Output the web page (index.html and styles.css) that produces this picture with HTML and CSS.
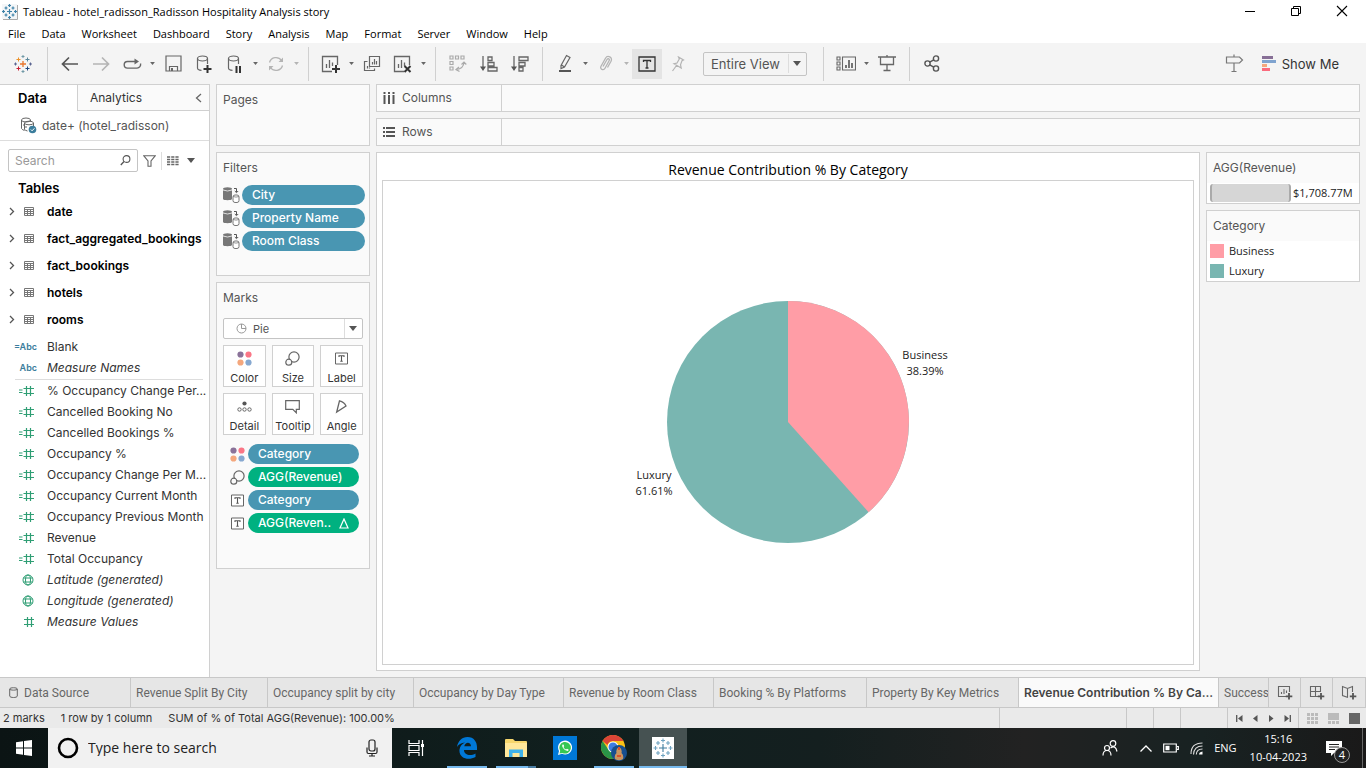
FILE: index.html
```html
<!DOCTYPE html>
<html lang="en">
<head>
<meta charset="utf-8">
<meta name="viewport" content="width=device-width, initial-scale=1">
<title>Tableau - hotel_radisson_Radisson Hospitality Analysis story</title>
<link rel="stylesheet" href="styles.css">
</head>
<body>
<svg class="defs" aria-hidden="true">
  <symbol id="caret" viewBox="0 0 8 5"><path d="M0 0h8L4 5z" fill="currentColor"/></symbol>
  <symbol id="table" viewBox="0 0 10 9"><path d="M.5.5h9v8h-9zM.5 2.500h9M.5 4.500h9M.5 6.500h9M3.500 2.500v6M6.500 2.500v6" fill="none" stroke="#777"/></symbol>
  <symbol id="chev" viewBox="0 0 6 9"><path d="M1 1l3.500 3.500L1 8" fill="none" stroke="#555" stroke-width="1.300"/></symbol>
  <symbol id="hash" viewBox="0 0 10 10"><path d="M3.500 0v10M7.500 0v10M0 2.500h10M0 7.500h10" stroke="#2f9e74" stroke-width="1.200"/></symbol>
  <symbol id="calc" viewBox="0 0 15 10"><path d="M7.500 0v10M11.500 0v10M4.500 2.500H15M4.500 7.500H15M0 4h3.500M0 6.500h3.500" stroke="#2f9e74" stroke-width="1.200"/></symbol>
  <symbol id="globe" viewBox="0 0 12 12"><g fill="none" stroke="#2f9e74" stroke-width="1"><circle cx="6" cy="6" r="5"/><ellipse cx="6" cy="6" rx="2.500" ry="5"/><path d="M1.500 4h9M1.500 8h9"/></g></symbol>
  <symbol id="context" viewBox="0 0 17 16"><path d="M0 2.500h9V12c0 1.600-9 1.600-9 0z" fill="#777"/><ellipse cx="4.500" cy="1.800" rx="4.500" ry="1.600" fill="#777"/><path d="M0 3q4.500 2 9 0" stroke="#fafafa" fill="none" stroke-width=".8"/><rect x="10" y="8" width="6" height="7.500" rx="2" fill="#fff" stroke="#777"/><path d="M10 9.500q3 1.200 6 0" fill="none" stroke="#777" stroke-width=".8"/><path d="M11 1.500h2.500V5M11.800 4l1.700 1.700L15.200 4" fill="none" stroke="#555"/></symbol>
  <symbol id="dots" viewBox="0 0 15 15"><circle cx="3.500" cy="3.500" r="3.100" fill="#8a7299"/><circle cx="11.500" cy="3.500" r="3.100" fill="#fa7686"/><circle cx="3.500" cy="11.500" r="3.100" fill="#f4a77d"/><circle cx="11.500" cy="11.500" r="3.100" fill="#86a8d0"/></symbol>
  <symbol id="size" viewBox="0 0 15 15"><g fill="none" stroke="#666" stroke-width="1.200"><circle cx="9" cy="6" r="5.100"/><circle cx="3.800" cy="11.200" r="3" fill="#fafafa"/></g></symbol>
  <symbol id="label" viewBox="0 0 13 13"><path d="M.5 1h12v11H.5z" fill="#fff" stroke="#666"/><path d="M4 5V3.800h5V5M6.500 3.800v5.500M5.300 9.300h2.400" fill="none" stroke="#555" stroke-width="1.100"/></symbol>
  <symbol id="sheet" viewBox="0 0 20 18"><path d="M11 16.500H1.500v-15h15V10M5.500 9v4M8.500 5v8M11.500 7.500V11" fill="none" stroke="#666" stroke-width="1.300"/></symbol>
  <symbol id="db" viewBox="0 0 16 18"><g fill="none" stroke="#666" stroke-width="1.200"><ellipse cx="6.500" cy="3.500" rx="5" ry="2.500"/><path d="M1.500 3.500V13c0 1.500 1.500 2.200 4 2.300M11.500 3.500V9"/></g></symbol>
</svg>

<header class="titlebar">
  <svg class="app-icon" width="16" height="16" viewBox="0 0 16 16"><path d="M0 0h15v15H0z" fill="#f4f6f8"/><path d="M15.500 1v14.500H1" fill="none" stroke="#aaa"/><g stroke="#3e82a8" stroke-width="1.200"><path d="M7.500 5v5M5 7.500h5M7.500 0v3M6 1.500h3M7.500 12v3M6 13.500h3M1.500 6v3M0 7.500h3M13.500 6v3M12 7.500h3M4 2.500v3M2.500 4h3M11 2.500v3M9.500 4h3M4 9.500v3M2.500 11h3M11 9.500v3M9.500 11h3"/></g></svg>
  <h1>Tableau - hotel_radisson_Radisson Hospitality Analysis story</h1>
  <div class="window-buttons">
    <button type="button" aria-label="Minimize"><svg width="12" height="12" viewBox="0 0 12 12"><path d="M1 6.500h10" stroke="#000"/></svg></button>
    <button type="button" aria-label="Restore"><svg width="12" height="12" viewBox="0 0 12 12"><path d="M1.500 3.500h7v7h-7zM3.500 3.500v-2h7v7h-2" fill="none" stroke="#000"/></svg></button>
    <button type="button" aria-label="Close"><svg width="12" height="12" viewBox="0 0 12 12"><path d="M1 1l10 10M11 1L1 11" stroke="#000" stroke-width="1.100"/></svg></button>
  </div>
</header>

<nav class="menubar" aria-label="Main menu">
  <button type="button">File</button><button type="button">Data</button><button type="button">Worksheet</button><button type="button">Dashboard</button><button type="button">Story</button><button type="button">Analysis</button><button type="button">Map</button><button type="button">Format</button><button type="button">Server</button><button type="button">Window</button><button type="button">Help</button>
</nav>

<div class="toolbar" role="toolbar" aria-label="Toolbar">
  <button type="button" class="tool start" aria-label="Start page"><svg width="18" height="18" viewBox="0 0 18 18"><g stroke-width="1"><path d="M9 6v6M6 9h6" stroke="#e8762d" stroke-width="1.300"/><path d="M9 0v3M7.500 1.500h3M9 15v3M7.500 16.500h3" stroke="#7099a6"/><path d="M1.500 7.500v3M0 9h3M16.500 7.500v3M15 9h3" stroke="#5b6591"/><path d="M4.500 2.500v4M2.500 4.500h4" stroke="#eb9129"/><path d="M13.500 2.500v4M11.500 4.500h4" stroke="#59879b"/><path d="M4.500 11.500v4M2.500 13.500h4" stroke="#c72035"/><path d="M13.500 11.500v4M11.500 13.500h4" stroke="#1f457e"/></g></svg></button>
  <span class="sep"></span>
  <button type="button" class="tool" aria-label="Undo"><svg width="18" height="16" viewBox="0 0 18 16"><path d="M17 8H2M8 1.500L1.500 8 8 14.500" fill="none" stroke="#555" stroke-width="1.700"/></svg></button>
  <button type="button" class="tool" aria-label="Redo"><svg width="18" height="16" viewBox="0 0 18 16"><path d="M1 8h15M10 1.500L16.500 8 10 14.500" fill="none" stroke="#b4b4b4" stroke-width="1.700"/></svg></button>
  <div class="split"><button type="button" class="tool" aria-label="Replay"><svg width="19" height="12" viewBox="0 0 19 12"><path d="M14 3.500H4.500a3.300 3.300 0 0 0 0 6.600h9.500a3.600 3.600 0 0 0 3.500-4.600" fill="none" stroke="#666" stroke-width="1.400"/><path d="M11.500.5v6l4.500-3z" fill="#666"/></svg></button><button type="button" class="drop" aria-label="Replay options"><svg width="5" height="3"><use href="#caret"/></svg></button></div>
  <button type="button" class="tool" aria-label="Save"><svg width="17" height="17" viewBox="0 0 17 17"><path d="M1 1h15v15H1zM4.500 16v-4.500h8V16" fill="none" stroke="#666" stroke-width="1.200"/><path d="M6 13h2v3H6z" fill="#666"/></svg></button>
  <button type="button" class="tool" aria-label="New data source"><svg width="16" height="18"><use href="#db"/><path d="M11.500 10v8M7.500 14h8" stroke="#333" stroke-width="2"/></svg></button>
  <div class="split"><button type="button" class="tool" aria-label="Pause auto updates"><svg width="16" height="18"><use href="#db"/><path d="M9.500 11v7M13 11v7" stroke="#333" stroke-width="2"/></svg></button><button type="button" class="drop" aria-label="Pause options"><svg width="5" height="3"><use href="#caret"/></svg></button></div>
  <div class="split dim"><button type="button" class="tool" aria-label="Run update"><svg width="18" height="16" viewBox="0 0 18 16"><path d="M2.500 6.500A6.700 6.700 0 0 1 14.500 4.500M15.500 9.500A6.700 6.700 0 0 1 3.500 11.500" fill="none" stroke="#b4b4b4" stroke-width="1.300"/><path d="M11.500 6h4.500V1.500zM6.500 10H2v4.500z" fill="#b4b4b4"/></svg></button><button type="button" class="drop" aria-label="Update options"><svg width="5" height="3"><use href="#caret"/></svg></button></div>
  <span class="sep"></span>
  <div class="split"><button type="button" class="tool" aria-label="New worksheet"><svg width="20" height="18"><use href="#sheet"/><path d="M15 10v8M11 14h8" stroke="#333" stroke-width="2"/></svg></button><button type="button" class="drop" aria-label="New options"><svg width="5" height="3"><use href="#caret"/></svg></button></div>
  <button type="button" class="tool" aria-label="Duplicate"><svg width="18" height="18" viewBox="0 0 18 18"><path d="M6.500 1.500h10v10h-10zM4.500 6.500h-3v9h10v-2M9.500 7v2.500M11.500 4v5.500M13.500 6v3.500M4.500 11v2.500M6.500 13.500v-1" fill="none" stroke="#666" stroke-width="1.200"/></svg></button>
  <div class="split"><button type="button" class="tool" aria-label="Clear sheet"><svg width="20" height="18"><use href="#sheet"/><path d="M11.500 11l6 6M17.500 11l-6 6" stroke="#333" stroke-width="2"/></svg></button><button type="button" class="drop" aria-label="Clear options"><svg width="5" height="3"><use href="#caret"/></svg></button></div>
  <span class="sep"></span>
  <button type="button" class="tool" aria-label="Swap rows and columns"><svg width="18" height="18" viewBox="0 0 18 18"><g fill="none" stroke="#aaa" stroke-width="1.200"><path d="M1 1h3v3H1zM6.500 1h3v3h-3zM12 1h3v3h-3zM1 6.500h3v3H1zM1 12h3v3H1zM15 7.500q-.5 6-7.500 7M12.500 9.500L15 7l2.300 2.500M10 12l-3 2.600 3.500 2"/></g></svg></button>
  <button type="button" class="tool" aria-label="Sort ascending"><svg width="18" height="16" viewBox="0 0 18 16"><path d="M3 0v13M8 1h4v3.500H8zM8 6.500h6V10H8zM8 11.500h9V15H8z" fill="none" stroke="#666" stroke-width="1.300"/><path d="M0 10.500h6L3 15z" fill="#555"/></svg></button>
  <button type="button" class="tool" aria-label="Sort descending"><svg width="18" height="16" viewBox="0 0 18 16"><path d="M3 0v13M8 1h9v3.500H8zM8 6.500h6V10H8zM8 11.500h4V15H8z" fill="none" stroke="#666" stroke-width="1.300"/><path d="M0 10.500h6L3 15z" fill="#555"/></svg></button>
  <span class="sep"></span>
  <div class="split"><button type="button" class="tool" aria-label="Highlight"><svg width="14" height="19" viewBox="0 0 14 19"><path d="M3 11.500L8.500 1.500l3.500 2L6.500 13 3 14.500zM3.500 11l3 2" fill="none" stroke="#666" stroke-width="1.200"/><path d="M1 16h12v2H1z" fill="#555"/></svg></button><button type="button" class="drop" aria-label="Highlight options"><svg width="5" height="3"><use href="#caret"/></svg></button></div>
  <div class="split dim"><button type="button" class="tool" aria-label="Group members"><svg width="14" height="17" viewBox="0 0 14 17"><path d="M4 11.500L8 4.500c1-1.500 3-.5 2.200 1L6 13.300C4.500 16 .5 14 2 11.200L6.500 3.200C8.500-.2 14 2 12 6.200L8.500 12.500" fill="none" stroke="#b4b4b4" stroke-width="1.300"/></svg></button><button type="button" class="drop" aria-label="Group options"><svg width="5" height="3"><use href="#caret"/></svg></button></div>
  <button type="button" class="tool pressed" aria-label="Show mark labels" aria-pressed="true"><svg width="18" height="16" viewBox="0 0 18 16"><path d="M1 1h16v14H1zM5.500 6V4.500h7V6M9 4.500v7.500M7.500 12h3" fill="none" stroke="#333" stroke-width="1.300"/></svg></button>
  <button type="button" class="tool" aria-label="Fix axes"><svg width="14" height="16" viewBox="0 0 14 16"><path d="M7.500 1l5 3-1.500.7-1.500 4 .7 3.300L3 7.800l3-.8L8.300 3zM5.500 9.500L1.500 15" fill="none" stroke="#b4b4b4" stroke-width="1.200"/></svg></button>
  <div class="combo fit"><select aria-label="Fit"><option>Entire View</option><option>Standard</option></select><svg width="8" height="5"><use href="#caret"/></svg></div>
  <span class="sep"></span>
  <div class="split"><button type="button" class="tool" aria-label="Show or hide cards"><svg width="20" height="15" viewBox="0 0 20 15"><path d="M1 1h3v3H1zM1 6h3v3H1zM1 11h3v3H1zM6.500 1h13v13h-13z" fill="none" stroke="#666" stroke-width="1.100"/><path d="M10 9v3M13 4v8M16 7v5" stroke="#555" stroke-width="1.600"/></svg></button><button type="button" class="drop" aria-label="Card options"><svg width="5" height="3"><use href="#caret"/></svg></button></div>
  <button type="button" class="tool" aria-label="Presentation mode"><svg width="18" height="17" viewBox="0 0 18 17"><path d="M0 2h18M2.500 2v7.500h13V2M9 9.500V16M5.500 15.500h7M9 0v2" fill="none" stroke="#666" stroke-width="1.300"/></svg></button>
  <span class="sep"></span>
  <button type="button" class="tool" aria-label="Share"><svg width="16" height="17" viewBox="0 0 16 17"><g fill="none" stroke="#555" stroke-width="1.400"><circle cx="3.500" cy="8.500" r="2.600"/><circle cx="12" cy="3.500" r="2.600"/><circle cx="12" cy="13.500" r="2.600"/><path d="M5.700 7.200l4-2.400M5.700 9.800l4 2.400"/></g></svg></button>
  <div class="tool-end">
    <button type="button" class="tool" aria-label="Guide"><svg width="19" height="19" viewBox="0 0 19 19"><path d="M1.500 3h13l3 3-3 3h-13zM9 .5V3M9 9v8.500M6.500 17.500h5" fill="none" stroke="#777" stroke-width="1.200"/></svg></button>
    <button type="button" class="showme"><svg width="14" height="15" viewBox="0 0 14 15"><path d="M0 0h11v3H0z" fill="#876f96"/><path d="M0 4h14v3H0z" fill="#7fa3cf"/><path d="M0 8h5v3H0z" fill="#f4a77d"/><path d="M0 12h8v3H0z" fill="#fa6b7d"/></svg>Show Me</button>
  </div>
</div>

<main class="workspace">
  <aside class="data-pane">
    <div class="pane-tabs"><button type="button" class="pane-tab on">Data</button><button type="button" class="pane-tab off">Analytics<svg width="7" height="10" viewBox="0 0 7 10"><path d="M6 1L1.500 5 6 9" fill="none" stroke="#666" stroke-width="1.300"/></svg></button></div>
    <button type="button" class="datasource"><svg width="17" height="17" viewBox="0 0 17 17"><g fill="none" stroke="#666"><path d="M1.500 3v8.500q1 1.500 3 2"/><ellipse cx="6" cy="3" rx="4.500" ry="2"/><path d="M10.500 3v1"/><ellipse cx="9" cy="6" rx="4.500" ry="1.800"/><path d="M4.500 6v6.500q1 1 3 1.500M13.500 6v3M3 8h1.500v2H7"/></g><circle cx="12.500" cy="12.500" r="3.800" fill="#3b7d9c"/><path d="M10.800 12.500l1.300 1.300 2.300-2.500" fill="none" stroke="#fff"/></svg>date+ (hotel_radisson)</button>
    <div class="search-row">
      <label class="search"><input type="search" placeholder="Search" aria-label="Search"><svg width="11" height="11" viewBox="0 0 11 11"><circle cx="6.500" cy="4" r="3.400" fill="none" stroke="#555" stroke-width="1.100"/><path d="M4 6.500L.8 10" stroke="#555" stroke-width="1.300"/></svg></label>
      <button type="button" aria-label="Filter fields"><svg width="13" height="12" viewBox="0 0 13 12"><path d="M.7.700h11.600L8 6v5.300H5V6z" fill="none" stroke="#666" stroke-width="1.100"/></svg></button>
      <span class="bar"></span>
      <button type="button" class="view-as" aria-label="View as"><svg width="12" height="10" viewBox="0 0 12 10"><path d="M0 1h12M0 3.500h12M0 6h12M0 8.500h12" stroke="#666" stroke-width="1.300" stroke-dasharray="3.200 1"/></svg><svg width="8" height="5"><use href="#caret"/></svg></button>
    </div>
    <h2>Tables</h2>
    <ul class="tables">
      <li><svg width="6" height="9"><use href="#chev"/></svg><svg width="10" height="9"><use href="#table"/></svg>date</li>
      <li><svg width="6" height="9"><use href="#chev"/></svg><svg width="10" height="9"><use href="#table"/></svg>fact_aggregated_bookings</li>
      <li><svg width="6" height="9"><use href="#chev"/></svg><svg width="10" height="9"><use href="#table"/></svg>fact_bookings</li>
      <li><svg width="6" height="9"><use href="#chev"/></svg><svg width="10" height="9"><use href="#table"/></svg>hotels</li>
      <li><svg width="6" height="9"><use href="#chev"/></svg><svg width="10" height="9"><use href="#table"/></svg>rooms</li>
    </ul>
    <ul class="fields dims">
      <li><span class="kind abc">=Abc</span>Blank</li>
      <li><span class="kind abc">Abc</span><em>Measure Names</em></li>
    </ul>
    <ul class="fields">
      <li><span class="kind"><svg width="15" height="10"><use href="#calc"/></svg></span>% Occupancy Change Per...</li>
      <li><span class="kind"><svg width="15" height="10"><use href="#calc"/></svg></span>Cancelled Booking No</li>
      <li><span class="kind"><svg width="15" height="10"><use href="#calc"/></svg></span>Cancelled Bookings %</li>
      <li><span class="kind"><svg width="15" height="10"><use href="#calc"/></svg></span>Occupancy %</li>
      <li><span class="kind"><svg width="15" height="10"><use href="#calc"/></svg></span>Occupancy Change Per M...</li>
      <li><span class="kind"><svg width="15" height="10"><use href="#calc"/></svg></span>Occupancy Current Month</li>
      <li><span class="kind"><svg width="15" height="10"><use href="#calc"/></svg></span>Occupancy Previous Month</li>
      <li><span class="kind"><svg width="15" height="10"><use href="#calc"/></svg></span>Revenue</li>
      <li><span class="kind"><svg width="15" height="10"><use href="#calc"/></svg></span>Total Occupancy</li>
      <li><span class="kind"><svg width="12" height="12"><use href="#globe"/></svg></span><em>Latitude (generated)</em></li>
      <li><span class="kind"><svg width="12" height="12"><use href="#globe"/></svg></span><em>Longitude (generated)</em></li>
      <li><span class="kind"><svg width="10" height="10"><use href="#hash"/></svg></span><em>Measure Values</em></li>
    </ul>
  </aside>

  <div class="cards">
    <section class="card pages"><h2>Pages</h2></section>
    <section class="card filters"><h2>Filters</h2>
      <div class="pill-row"><svg width="17" height="16"><use href="#context"/></svg><button type="button" class="pill">City</button></div>
      <div class="pill-row"><svg width="17" height="16"><use href="#context"/></svg><button type="button" class="pill">Property Name</button></div>
      <div class="pill-row"><svg width="17" height="16"><use href="#context"/></svg><button type="button" class="pill">Room Class</button></div>
    </section>
    <section class="card marks"><h2>Marks</h2>
      <div class="combo mark-type"><svg class="pie-icon" width="11" height="11" viewBox="0 0 11 11"><circle cx="5.500" cy="5.500" r="4.500" fill="none" stroke="#999"/><path d="M5.500 1v4.500H10" fill="none" stroke="#999"/></svg><select aria-label="Mark type"><option>Pie</option><option>Bar</option></select><svg width="8" height="5"><use href="#caret"/></svg></div>
      <div class="mark-grid">
        <button type="button"><svg width="15" height="15"><use href="#dots"/></svg>Color</button>
        <button type="button"><svg width="15" height="15"><use href="#size"/></svg>Size</button>
        <button type="button"><svg width="15" height="15" viewBox="0 0 15 15"><use href="#label" x="1" y="1" width="13" height="13"/></svg>Label</button>
        <button type="button"><svg width="15" height="15" viewBox="0 0 15 15"><circle cx="7.500" cy="4.500" r="2.100" fill="#555"/><g fill="none" stroke="#666"><circle cx="2.500" cy="10.500" r="1.700"/><circle cx="7.500" cy="10.500" r="1.700"/><circle cx="12.500" cy="10.500" r="1.700"/></g></svg>Detail</button>
        <button type="button"><svg width="15" height="15" viewBox="0 0 15 15"><path d="M.7 1.700h13.600v8.600h-3v3.500L7.800 10.300H.7z" fill="none" stroke="#666" stroke-width="1.200"/></svg>Tooltip</button>
        <button type="button"><svg width="15" height="15" viewBox="0 0 15 15"><path d="M2.700 13L5.500 1.800q4.800 1 6.500 5.200z" fill="none" stroke="#666" stroke-width="1.300"/></svg>Angle</button>
      </div>
      <div class="pill-row on-mark"><svg width="15" height="15"><use href="#dots"/></svg><button type="button" class="pill">Category</button></div>
      <div class="pill-row on-mark"><svg width="15" height="15"><use href="#size"/></svg><button type="button" class="pill green">AGG(Revenue)</button></div>
      <div class="pill-row on-mark"><svg width="15" height="13"><use href="#label"/></svg><button type="button" class="pill">Category</button></div>
      <div class="pill-row on-mark"><svg width="15" height="13"><use href="#label"/></svg><button type="button" class="pill green">AGG(Reven..<svg width="10" height="11" viewBox="0 0 10 11"><path d="M5 1l4 9H1z" fill="none" stroke="#fff" stroke-width="1.200"/></svg></button></div>
    </section>
  </div>

  <div class="sheet">
    <section class="shelf"><h2><svg width="12" height="12" viewBox="0 0 12 12"><path d="M1.500 0v2M6 0v2M10.500 0v2M1.500 3v9M6 3v9M10.500 3v9" stroke="#555" stroke-width="2"/></svg>Columns</h2></section>
    <section class="shelf"><h2><svg width="12" height="12" viewBox="0 0 12 12"><path d="M0 2h2M0 6h2M0 10h2M3 2h9M3 6h9M3 10h9" stroke="#555" stroke-width="2"/></svg>Rows</h2></section>
    <div class="view-row">
      <section class="view">
        <h2>Revenue Contribution % By Category</h2>
        <div class="plot">
          <svg class="chart" viewBox="0 0 360 244" role="img" aria-label="Revenue contribution by category">
            <circle cx="180" cy="121" r="121" fill="#79b6b1"/>
            <path d="M180 121V0a121 121 0 0 1 80.600 211.200z" fill="#ff9da6"/>
            <text x="317" y="58">Business</text><text x="317" y="74">38.39%</text>
            <text x="46" y="178">Luxury</text><text x="46" y="194">61.61%</text>
          </svg>
        </div>
      </section>
      <div class="legends">
        <section class="legend"><h2>AGG(Revenue)</h2><div class="range"><span></span>$1,708.77M</div></section>
        <section class="legend"><h2>Category</h2><ul><li><i class="business"></i>Business</li><li><i class="luxury"></i>Luxury</li></ul></section>
      </div>
    </div>
  </div>
</main>

<nav class="sheet-tabs" aria-label="Sheets">
  <button type="button" class="source"><svg width="9" height="11" viewBox="0 0 9 11"><path d="M.7 2v7c0 2 7.600 2 7.600 0V2C8.300.3.700.3.700 2zM.7 2c0 1.500 7.600 1.500 7.600 0" fill="none" stroke="#666"/></svg>Data Source</button>
  <button type="button">Revenue Split By City</button><button type="button">Occupancy split by city</button><button type="button">Occupancy by Day Type</button><button type="button">Revenue by Room Class</button><button type="button">Booking % By Platforms</button><button type="button">Property By Key Metrics</button><button type="button" class="current">Revenue Contribution % By Ca...</button><button type="button">Success</button>
  <button type="button" class="new" aria-label="New worksheet"><svg width="16" height="15" viewBox="0 0 16 15"><path d="M9 11.500H1.500v-10h11V7M4.500 7v2M7 4v5M9.500 5.500V8" fill="none" stroke="#666" stroke-width="1.100"/><path d="M12 8v6.500M8.800 11.300h6.500" stroke="#555" stroke-width="1.800"/></svg></button>
  <button type="button" class="new" aria-label="New dashboard"><svg width="16" height="15" viewBox="0 0 16 15"><path d="M9 11.500H1.500v-10h10V7M1.500 6.500h10M6.500 1.500v10" fill="none" stroke="#666" stroke-width="1.100"/><path d="M12 8v6.500M8.800 11.300h6.500" stroke="#555" stroke-width="1.800"/></svg></button>
  <button type="button" class="new" aria-label="New story"><svg width="16" height="15" viewBox="0 0 16 15"><path d="M7 12.500l-5.500-2v-9l5 2 5-2V7M6.500 3.500v9" fill="none" stroke="#666" stroke-width="1.100"/><path d="M12 8v6.500M8.800 11.300h6.500" stroke="#555" stroke-width="1.800"/></svg></button>
</nav>

<footer class="status">
  <div class="summary"><span>2 marks</span><span>1 row by 1 column</span><span>SUM of % of Total AGG(Revenue): 100.00%</span></div>
  <span></span><span></span><span></span><span></span>
  <div class="pager">
    <button type="button" aria-label="First"><svg width="7" height="7" viewBox="0 0 7 7"><path d="M.7 0v7" stroke="#555" stroke-width="1.300"/><path d="M6.500 0v7L2 3.500z" fill="#555"/></svg></button>
    <button type="button" aria-label="Previous"><svg width="7" height="7" viewBox="0 0 7 7"><path d="M5.500 0v7L1 3.500z" fill="#555"/></svg></button>
    <button type="button" aria-label="Next"><svg width="7" height="7" viewBox="0 0 7 7"><path d="M1 0v7l4.500-3.500z" fill="#555"/></svg></button>
    <button type="button" aria-label="Last"><svg width="7" height="7" viewBox="0 0 7 7"><path d="M6.300 0v7" stroke="#555" stroke-width="1.300"/><path d="M.5 0v7L5 3.500z" fill="#555"/></svg></button>
  </div>
  <div class="modes">
    <button type="button" aria-label="Sheet sorter"><svg width="11" height="11" viewBox="0 0 11 11"><path d="M0 1.500h11M0 5.500h11M0 9.500h11" stroke="#bbb" stroke-width="3" stroke-dasharray="3 1"/></svg></button>
    <button type="button" aria-label="Filmstrip"><svg width="11" height="11" viewBox="0 0 11 11"><path d="M0 0h11v7H0z" fill="#bbb"/><path d="M0 9.500h11" stroke="#bbb" stroke-width="3" stroke-dasharray="3 1"/></svg></button>
    <button type="button" aria-label="Tabs"><svg width="11" height="11" viewBox="0 0 11 11"><path d="M0 0h11v11H0z" fill="#666"/></svg></button>
  </div>
</footer>

<div class="taskbar">
  <button type="button" class="task" aria-label="Start"><svg width="16" height="16" viewBox="0 0 16 16"><path d="M0 2.300L7 1.300v6.200H0zM8 1.100L16 0v7.500H8zM0 8.500h7v6.200l-7-1zM8 8.500h8V16l-8-1.100z" fill="#fff"/></svg></button>
  <label class="task-search"><svg width="22" height="22" viewBox="0 0 22 22"><circle cx="11" cy="11" r="9" fill="none" stroke="#000" stroke-width="2.600"/></svg><input type="text" placeholder="Type here to search" aria-label="Type here to search"><svg width="12" height="18" viewBox="0 0 12 18"><rect x="3" y="1" width="6" height="11" rx="2" fill="none" stroke="#222" stroke-width="1.200"/><path d="M1 8.500v4.500q0 1.500 1.500 1.500h7q1.500 0 1.500-1.500V8.500M6 14.500V17M3 17h6" fill="none" stroke="#222" stroke-width="1.200"/></svg></label>
  <button type="button" class="task" aria-label="Task view"><svg width="17" height="16" viewBox="0 0 17 16"><path d="M1 0v3.500h10V0M1 5.500h10v5H1zM1 16v-3.500h10V16M14.500 0v16" fill="none" stroke="#fff" stroke-width="1.200"/><path d="M13 4h3v3h-3z" fill="#fff"/></svg></button>
  <div class="apps">
    <button type="button" class="task running" aria-label="Edge"><svg width="22" height="22" viewBox="0 0 22 22"><path d="M1 10C2 4 6 0 11.500 0 18 0 21 5 21 10v3H8c0 5 6.500 6.500 11.500 3.500V20C12 24 2.500 21 3.500 12.500 4 9 6 7 9 5.500 5 6 2.500 7.500 1 10zM8.300 9.300H15C15 4.500 9 4.500 8.300 9.300z" fill="#0078d7"/></svg></button>
    <button type="button" class="task running many" aria-label="File Explorer"><svg width="22" height="19" viewBox="0 0 22 19"><path d="M0 2V1q0-1 1-1h7l2 2h11q1 0 1 1v15H0z" fill="#f6d66d"/><path d="M0 4h22v14H0z" fill="#ffe79a"/><path d="M4 10.500h14V18h-3.500v-4h-7v4H4z" fill="#3fb2ea"/></svg></button>
    <button type="button" class="task" aria-label="WhatsApp"><svg width="24" height="24" viewBox="0 0 24 24"><path d="M0 0h24v24H0z" fill="#0078d7"/><path d="M5 19l1-4a7 7 0 1 1 3 2.800z" fill="#fff"/><path d="M6.500 17.500l.7-2.600a5.800 5.800 0 1 1 2.200 2z" fill="#35c752"/><path d="M9.500 8.500q-1 1 .5 3.500 2 3 4.500 3 1.500-.5 1-1.500l-1.500-.8-1 .9q-2-.9-2.500-2.600l.7-.8-.7-1.700z" fill="#fff"/></svg></button>
    <button type="button" class="task running" aria-label="Chrome"><svg width="26" height="26" viewBox="0 0 26 26"><circle cx="12" cy="12" r="12" fill="#fbc116"/><path d="M1.600 6A12 12 0 0 1 22.400 6H12a6 6 0 0 0-5.500 4z" fill="#db4437"/><path d="M1.600 6A12 12 0 0 0 12 24l4.500-8L7 14z" fill="#2a9447"/><circle cx="12" cy="12" r="5.500" fill="#fff"/><circle cx="12" cy="12" r="4.500" fill="#3f7de0"/><circle cx="18" cy="18" r="8" fill="#184f8f"/><path d="M14 24q-1-4 1.500-6-1-4 2.500-6 3.500 2 2.500 6 2.500 2 1.500 6-4 2.500-8 0z" fill="#c99560"/><path d="M17 12h2v3h-2zM16 20h4v2h-4z" fill="#d9532c"/></svg></button>
    <button type="button" class="task running active" aria-label="Tableau"><svg width="22" height="22" viewBox="0 0 22 22"><path d="M0 0h22v22H0z" fill="#fff"/><g stroke="#3e7c9e" stroke-width="1.100"><path d="M11 7v8M7 11h8"/><path d="M11 1.500v4M9 3.500h4M11 16.500v4M9 18.500h4M3.500 9v4M1.500 11h4M18.500 9v4M16.500 11h4M6 4v4M4 6h4M16 4v4M14 6h4M6 14v4M4 16h4M16 14v4M14 16h4" stroke="#6ea3c0"/></g></svg></button>
  </div>
  <div class="tray">
    <button type="button" class="people" aria-label="People"><svg width="16" height="16" viewBox="0 0 16 16"><g fill="none" stroke="#fff" stroke-width="1.200"><circle cx="5" cy="8" r="2.500"/><path d="M1 15.500q0-5 4-5t4 5"/><circle cx="11" cy="3.500" r="2.800"/><path d="M8.500 8q5-3.500 6.500 3.500"/></g></svg></button>
    <button type="button" aria-label="Hidden icons"><svg width="12" height="7" viewBox="0 0 12 7"><path d="M.5 6.500L6 1l5.500 5.500" fill="none" stroke="#fff" stroke-width="1.300"/></svg></button>
    <button type="button" aria-label="Battery"><svg width="16" height="10" viewBox="0 0 16 10"><path d="M.7 1h12.600v8H.7zM14 3.500h1.300v3H14" fill="none" stroke="#fff" stroke-width="1.200"/><path d="M2.500 2.800h4v4.400h-4z" fill="#fff"/></svg></button>
    <button type="button" aria-label="Network"><svg width="13" height="13" viewBox="0 0 13 13"><g fill="none" stroke="#ddd" stroke-width="1.100"><path d="M1 12Q1 1 12.500 1M3.500 12.500Q4 4 12.500 4M6.300 12.500Q6.500 7 12.500 7"/></g><path d="M9 12.500Q9 10 12.500 9.500v3z" fill="#fff"/></svg></button>
    <button type="button" class="lang">ENG</button>
    <button type="button" class="clock"><span>15:16</span><span>10-04-2023</span></button>
    <button type="button" class="notes" aria-label="Notifications"><svg width="16" height="15" viewBox="0 0 16 15"><path d="M0 0h16v12H8l-3 3v-3H0z" fill="#fff"/><path d="M3 3.500h10M3 6h10M3 8.500h6" stroke="#222"/></svg><span class="badge">4</span></button>
  </div>
</div>
</body>
</html>
```
FILE: styles.css
```css
* { box-sizing: border-box; }

:root {
  --ui: Inter, Roboto, "Liberation Sans", sans-serif;
  --narrow: Roboto, "Liberation Sans", sans-serif;
  --win: "Open Sans", "Noto Sans", sans-serif;
  --line: #d0d0d0;
  --panel: #fafafa;
  --ground: #f4f4f4;
}

body {
  margin: 0;
  min-height: 100vh;
  display: flex;
  flex-direction: column;
  background: var(--ground);
  color: #333;
  font-family: var(--ui);
  font-size: 12px;
  line-height: 16px;
}

button, input, select { font: inherit; color: inherit; }
button { border: 0; margin: 0; padding: 0; background: none; white-space: nowrap; }
h1, h2 { margin: 0; font-size: inherit; font-weight: 400; }
ul { margin: 0; padding: 0; list-style: none; }
svg { display: block; flex: none; }
.defs { position: absolute; width: 0; height: 0; }

/* Window frame */
.titlebar {
  display: flex;
  align-items: center;
  gap: 5px;
  height: 24px;
  padding-left: 2px;
  background: #fff;
  color: #000;
  font-family: var(--win);
  font-size: 11px;
}
.window-buttons { display: flex; margin-left: auto; padding: 0 1px 2px 0; }
.window-buttons button { width: 46px; display: grid; place-items: center; }
.menubar {
  display: flex;
  gap: 16px;
  height: 19px;
  padding-left: 8px;
  background: #fff;
  color: #000;
  font-family: var(--win);
  font-size: 11px;
}

/* Toolbar */
.toolbar {
  display: flex;
  align-items: center;
  gap: 1px;
  height: 41px;
  padding-left: 8px;
  color: #666;
}
.tool { width: 30px; height: 30px; display: grid; place-items: center; }
.start { margin-right: 2px; }
.tool.pressed { background: #e4e4e4; }
.split { display: flex; }
.drop { width: 10px; display: grid; place-items: center; }
.dim { color: #b4b4b4; }
.sep { width: 1px; height: 34px; margin: 0 6px; background: var(--line); }
.combo {
  display: grid;
  grid-template-columns: 1fr 18px;
  align-items: center;
  border: 1px solid #c4c4c4;
  border-radius: 2px;
  background: #fff;
  color: #555;
}
.combo select {
  grid-area: 1 / 1 / 2 / 3;
  width: 100%;
  height: 100%;
  border: 0;
  background: none;
  appearance: none;
}
.combo > svg:last-child {
  grid-area: 1 / 2;
  box-sizing: content-box;
  padding: 7px 4px;
  border-left: 1px solid #ddd;
}
.fit { width: 104px; height: 24px; margin: 0 9px; background: var(--ground); font-size: 13px; }
.fit select { padding: 0 7px; }
.tool-end { display: flex; align-items: center; gap: 12px; margin-left: auto; padding-right: 27px; }
.showme { display: flex; align-items: center; gap: 6px; color: #333; font-size: 13px; }

/* Workspace */
.workspace { flex: 1; display: flex; }
.data-pane {
  width: 210px;
  flex: none;
  background: #fff;
  border-top: 1px solid var(--line);
  border-right: 1px solid var(--line);
}
.pane-tabs { display: flex; height: 26px; }
.pane-tab { text-align: left; }
.on { width: 77px; padding-left: 18px; color: #000; font-size: 13px; font-weight: 600; }
.off {
  flex: 1;
  display: flex;
  align-items: center;
  justify-content: space-between;
  padding: 0 7px 0 12px;
  border-left: 1px solid var(--line);
  border-bottom: 1px solid var(--line);
  background: var(--panel);
}
.datasource {
  display: flex;
  align-items: center;
  gap: 5px;
  width: 100%;
  height: 30px;
  padding-left: 20px;
  border-bottom: 1px solid #ddd;
  color: #555;
}
.search-row { display: flex; align-items: center; gap: 5px; padding: 8px 8px 6px; color: #555; }
.search {
  width: 130px;
  height: 23px;
  display: flex;
  align-items: center;
  padding-right: 6px;
  border: 1px solid #c4c4c4;
  border-radius: 2px;
}
.search input { flex: 1; min-width: 0; border: 0; padding: 0 6px; background: none; outline: 0; appearance: none; }
.search input::placeholder { color: #999; opacity: 1; }
.bar { width: 1px; height: 18px; background: #ddd; }
.view-as { display: flex; align-items: center; gap: 8px; }
.data-pane h2 { height: 20px; padding-left: 18px; line-height: 20px; color: #000; font-size: 13px; font-weight: 600; }
.tables li {
  display: grid;
  grid-template-columns: 15px 23px 1fr;
  align-items: center;
  height: 27px;
  padding-left: 9px;
  color: #000;
  font-weight: 600;
}
.dims { padding-top: 3px; }
.dims::after { content: ""; display: block; height: 1px; margin: 1px 6px 0 15px; background: #ddd; }
.fields li { display: flex; align-items: center; height: 21px; white-space: nowrap; }
.kind { width: 47px; padding-right: 13px; display: flex; justify-content: flex-end; }
.abc { padding-right: 10px; color: #3b7d9c; font-size: 9px; font-weight: 600; }

/* Cards */
.cards { width: 154px; flex: none; margin-left: 6px; display: flex; flex-direction: column; gap: 6px; }
.card { padding: 7px 6px; border: 1px solid var(--line); background: var(--panel); }
.card h2 { color: #555; }
.pages { height: 62px; }
.filters { height: 124px; padding-right: 4px; }
.marks { height: 287px; }
.pill-row { display: grid; grid-template-columns: 19px 1fr; align-items: center; margin-bottom: 3px; }
.filters h2 { margin-bottom: 9px; }
.on-mark { padding: 0 4px 0 7px; grid-template-columns: 18px 1fr; }
.pill {
  display: flex;
  align-items: center;
  gap: 8px;
  height: 20px;
  padding-left: 10px;
  border-radius: 10px;
  background: #4996b2;
  color: #fff;
  font-weight: 500;
}
.green { background: #00b180; }
.mark-type { height: 21px; margin: 12px 0 6px; font-size: 11px; }
.mark-type select { padding-left: 29px; }
.pie-icon { grid-area: 1 / 1; margin-left: 12px; }
.mark-grid { display: grid; grid-template-columns: repeat(3, 1fr); gap: 6px; margin-bottom: 9px; font-size: 11px; }
.mark-grid button {
  height: 42px;
  display: flex;
  flex-direction: column;
  align-items: center;
  gap: 4px;
  padding-top: 5px;
  border: 1px solid var(--line);
  background: #fff;
}

/* Sheet */
.sheet { flex: 1; min-width: 0; display: flex; flex-direction: column; gap: 6px; margin: 0 6px; }
.shelf { height: 28px; border: 1px solid var(--line); background: var(--panel); }
.shelf h2 {
  width: 125px;
  height: 26px;
  display: flex;
  align-items: center;
  gap: 7px;
  padding-left: 6px;
  border-right: 1px solid var(--line);
  color: #555;
}
.view-row { flex: 1; display: flex; gap: 6px; }
.view {
  flex: 1;
  display: flex;
  flex-direction: column;
  margin-bottom: 6px;
  padding: 7px 5px 5px;
  border: 1px solid var(--line);
  background: #fff;
}
.view h2 { height: 20px; line-height: 20px; color: #000; text-align: center; font-family: var(--win); font-size: 14px; }
.plot { flex: 1; display: grid; place-items: center; border: 1px solid var(--line); }
.chart { width: 360px; font-family: var(--win); font-size: 11px; text-anchor: middle; fill: #222; }
.legends { width: 154px; display: flex; flex-direction: column; gap: 6px; }
.legend { border: 1px solid var(--line); background: #fff; color: #222; font-family: var(--win); font-size: 11px; }
.legend h2 { height: 30px; padding-left: 6px; line-height: 30px; background: var(--panel); color: #555; font-family: var(--ui); font-size: 12px; }
.range { height: 20px; display: flex; align-items: center; gap: 2px; padding-left: 3px; }
.range span { width: 81px; height: 18px; border: solid #aaa; border-width: 0 2px; border-radius: 3px; background: #d6d6d6; }
.legend li { height: 20px; display: flex; align-items: center; gap: 5px; padding-left: 3px; }
.legend i { width: 14px; height: 14px; }
.business { background: #ff9da6; }
.luxury { background: #79b6b1; }

/* Sheet tabs */
.sheet-tabs {
  display: grid;
  grid-template-columns: 131px 137px 146px 150px 150px 153px 152px 200px 1fr 32px 32px 33px;
  height: 31px;
  border-top: 1px solid #c8c8c8;
  border-bottom: 1px solid #c8c8c8;
  background: #e6e6e6;
  color: #666;
  font-family: var(--narrow);
}
.sheet-tabs button { min-width: 0; overflow: hidden; padding-left: 5px; border-right: 1px solid #c8c8c8; text-align: left; }
.sheet-tabs .source { display: flex; align-items: center; gap: 6px; padding-left: 9px; }
.sheet-tabs .current { background: var(--panel); color: #444; font-family: var(--ui); font-weight: 600; }
.sheet-tabs .new { display: grid; place-items: center; padding: 0; }

/* Status bar */
.status {
  display: grid;
  grid-template-columns: 1fr 127px 27px 27px 47px 71px 68px;
  height: 20px;
  background: #eaeaea;
  font-size: 11px;
}
.status > * + * { border-left: 1px solid #c8c8c8; }
.summary { display: flex; align-items: center; gap: 16px; padding-left: 3px; }
.pager { display: flex; align-items: center; gap: 9px; padding-left: 8px; }
.modes { display: flex; align-items: center; justify-content: space-between; padding: 0 6px 0 8px; }

/* Taskbar */
.taskbar {
  display: flex;
  height: 40px;
  background: linear-gradient(90deg, #0b1414 0, #11201f 45%, #141f1f 60%, #222 75%, #182222 88%, #1a1919 100%);
  color: #fff;
  font-family: var(--win);
  font-size: 11px;
}
.task { width: 48px; height: 40px; display: grid; place-items: center; }
.task-search { width: 344px; display: flex; align-items: center; padding: 0 14px 0 9px; background: #f1f1f1; }
.task-search input { flex: 1; min-width: 0; border: 0; padding: 0 9px; background: none; outline: 0; font-size: 14px; }
.task-search input::placeholder { color: #222; opacity: 1; }
.apps { display: flex; gap: 1px; padding-left: 3px; }
.running { background: linear-gradient(#76b9ed, #76b9ed) 50% 100% / 40px 2px no-repeat; }
.many { background: linear-gradient(90deg, #76b9ed 80%, #4a7da3 80%) 50% 100% / 40px 2px no-repeat; }
.active { background: linear-gradient(#76b9ed, #76b9ed) 0 100% / 48px 2px no-repeat, #465252; }
.tray { display: flex; align-items: center; gap: 10px; margin-left: auto; padding-right: 3px; }
.tray button { min-width: 15px; display: grid; place-items: center; }
.tray .people { margin-right: 10px; }
.tray .clock { margin-left: 3px; line-height: 18px; }
.tray .notes { position: relative; width: 46px; height: 40px; padding-right: 12px; border-right: 1px solid #666; }
.badge {
  position: absolute;
  left: 17px;
  top: 19px;
  width: 16px;
  height: 16px;
  border: 1px solid #999;
  border-radius: 8px;
  background: #222;
  line-height: 14px;
}
```
